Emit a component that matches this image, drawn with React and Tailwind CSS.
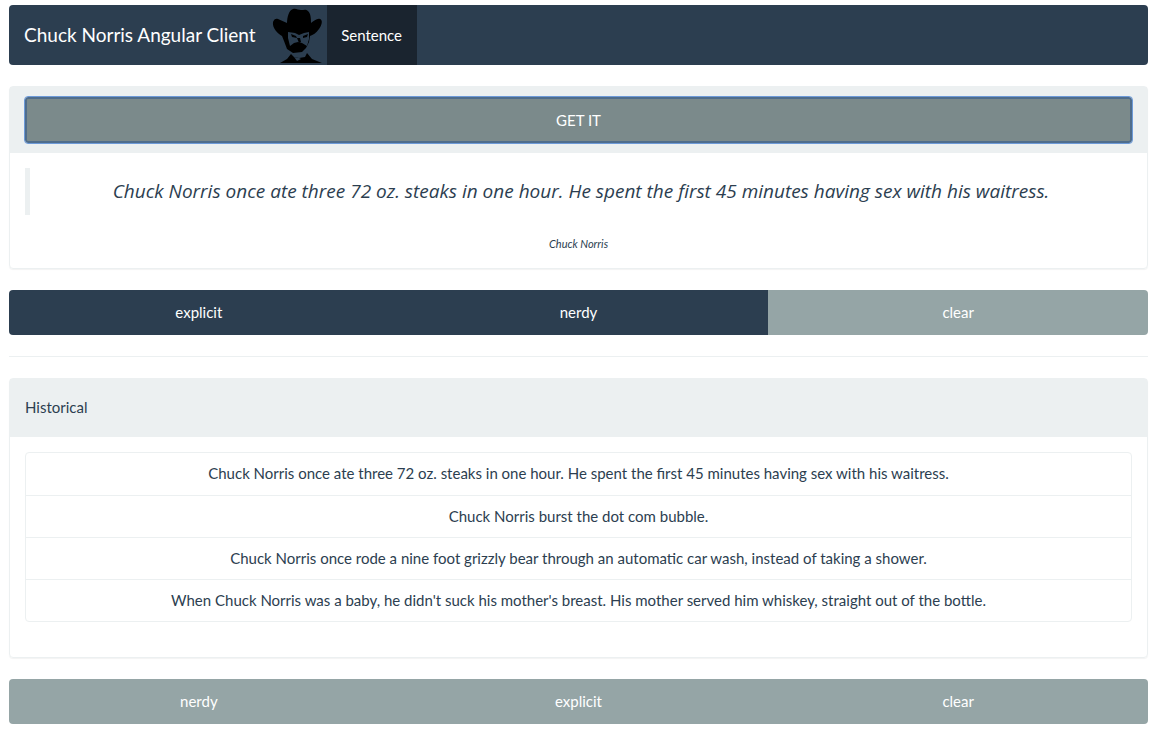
const history = [
  'Chuck Norris once ate three 72 oz. steaks in one hour. He spent the first 45 minutes having sex with his waitress.',
  'Chuck Norris burst the dot com bubble.',
  'Chuck Norris once rode a nine foot grizzly bear through an automatic car wash, instead of taking a shower.',
  "When Chuck Norris was a baby, he didn't suck his mother's breast. His mother served him whiskey, straight out of the bottle.",
];

function ChuckLogo() {
  return (
    <svg className="h-[56px] w-[56px] shrink-0" viewBox="0 0 56 56">
      {/* hat */}
      <path d="M2 15c1-3 3-4 5-3 3 1 6 3 9 4 0-6 2-13 6-14 3-1 5 1 8 1 3 0 5-1 7 1 3 3 3 8 3 12 3-2 6-5 9-4 3 1 2 6-1 10-3 4-6 6-9 7l-1 6-3 6-4 4-9 1-6-4-3-8-2-5C7 27 1 21 2 15z" fill="#000" />
      {/* face */}
      <path d="M17 25l7 1 4 2 5-2 5-1 0 7-2 7-5-3-4-1-4 1-4 3-2-8z" fill="#2c3e50" />
      <path d="M20 27l5 2 1 2-5-1zM32 29l5-2-1 3-4 1zM26 31l2 5 2-1-1-4z" fill="#000" />
      {/* shoulders */}
      <path d="M9 56l7-4 4-5 3 3 5 1 6-1 2-4 5 6 10 4z" fill="#000" />
      <path d="M23 50l3 4 4-2-2-1z" fill="#2c3e50" />
    </svg>
  );
}

function ButtonRow({ items }) {
  return (
    <div className="flex h-[45px] overflow-hidden rounded">
      {items.map((item) => (
        <button
          key={item.label}
          className={`flex-1 text-[15px] text-white ${item.dark ? 'bg-[#2c3e50]' : 'bg-[#95a5a6]'}`}
        >
          {item.label}
        </button>
      ))}
    </div>
  );
}

export default function App() {
  return (
    <div className="min-h-[741px] bg-white px-[9px] pt-[5px] font-['Lato','Open_Sans',sans-serif] text-[15px] text-[#2c3e50]">
      {/* Navbar */}
      <nav className="flex h-[60px] items-center overflow-hidden rounded bg-[#2c3e50] pl-[15px] text-white">
        <span className="mr-[15px] text-[19px]">Chuck Norris Angular Client</span>
        <ChuckLogo />
        <a href="#" className="flex h-full w-[90px] items-center justify-center bg-[#1a242f]">Sentence</a>
      </nav>

      {/* Quote card */}
      <div className="mt-[21px] rounded border border-[#ecf0f1] shadow-[0_1px_1px_rgba(0,0,0,0.05)]">
        <div className="bg-[#ecf0f1] px-[15px] pb-[10px] pt-[10px]">
          <button className="h-[46px] w-full rounded-[3px] border-2 border-[#4f6d8c] bg-[#7b8a8b] text-white outline outline-1 outline-[#6d9ad8]">
            GET IT
          </button>
        </div>
        <div className="px-[15px] pb-[15px] pt-[15px]">
          <blockquote className="flex h-[47px] items-center justify-center border-l-[5px] border-[#ecf0f1]">
            <p className="font-['Open_Sans',sans-serif] text-[19px] italic">
              Chuck Norris once ate three 72 oz. steaks in one hour. He spent the first 45 minutes having sex with his waitress.
            </p>
          </blockquote>
          <p className="mt-[21px] text-center text-[11px] italic">Chuck Norris</p>
        </div>
      </div>

      <div className="mt-[21px]">
        <ButtonRow items={[{ label: 'explicit', dark: true }, { label: 'nerdy', dark: true }, { label: 'clear' }]} />
      </div>

      <hr className="mb-[21px] mt-[21px] border-[#ecf0f1]" />

      {/* Historical */}
      <div className="rounded border border-[#ecf0f1] shadow-[0_1px_1px_rgba(0,0,0,0.05)]">
        <div className="flex h-[58px] items-center bg-[#ecf0f1] px-[15px]">Historical</div>
        <div className="px-[15px] pb-[35px] pt-[15px]">
          <ul className="rounded border border-[#ecf0f1]">
            {history.map((line, i) => (
              <li key={line} className={`flex h-[42px] items-center justify-center ${i > 0 ? 'border-t border-[#ecf0f1]' : ''}`}>
                {line}
              </li>
            ))}
          </ul>
        </div>
      </div>

      <div className="mt-[21px]">
        <ButtonRow items={[{ label: 'nerdy' }, { label: 'explicit' }, { label: 'clear' }]} />
      </div>
    </div>
  );
}
